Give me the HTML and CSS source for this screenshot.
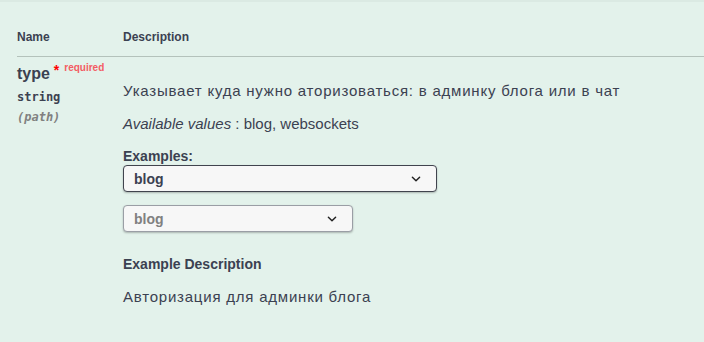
FILE: index.html
```html
<!DOCTYPE html>
<html lang="ru">
  <head>
    <meta charset="UTF-8" />
    <meta name="viewport" content="width=device-width, initial-scale=1.0" />
    <title>Parameters</title>
    <link rel="stylesheet" href="styles.css">
  </head>
  <body>
    <div class="params">
      <div class="params-head">
        <div class="col-name">Name</div>
        <div class="col-desc">Description</div>
      </div>

      <div class="param-row">
        <div class="col-name">
          <div class="param-name">type<span class="star">&nbsp;*</span><span class="required">required</span></div>
          <div class="param-type">string</div>
          <div class="param-in">(path)</div>
        </div>

        <div class="col-desc">
          <p class="desc-text cyr">Указывает куда нужно аторизоваться: в админку блога или в чат</p>
          <p class="desc-text"><i>Available values</i> : blog, websockets</p>

          <div class="examples-label">Examples:</div>
          <div class="select select-examples">
            <span>blog</span>
            <svg class="chevron" viewBox="0 0 20 20" width="12" height="12">
              <path d="M4 7 L10 13 L16 7" fill="none" stroke="#222" stroke-width="2.4" stroke-linecap="round" stroke-linejoin="round" />
            </svg>
          </div>

          <div class="select select-value">
            <span>blog</span>
            <svg class="chevron" viewBox="0 0 20 20" width="12" height="12">
              <path d="M4 7 L10 13 L16 7" fill="none" stroke="#222" stroke-width="2.4" stroke-linecap="round" stroke-linejoin="round" />
            </svg>
          </div>

          <div class="example-title">Example Description</div>
          <p class="desc-text cyr">Авторизация для админки блога</p>
        </div>
      </div>
    </div>
  </body>
</html>
```

FILE: styles.css
```css
body {
  margin: 0;
  background-color: #e3f2eb;
  border-top: 2px solid #dbeae3;
  font-family: "Liberation Sans", Arial, sans-serif;
  color: #3b4151;
  height: 340px;
  overflow: hidden;
}

.params {
  padding-left: 17px;
}

.params-head {
  display: flex;
  padding: 28px 0 12px;
  border-bottom: 1px solid #b4c2bb;
  font-size: 12px;
  font-weight: 700;
  line-height: 14px;
}

.col-name {
  width: 106px;
  flex-shrink: 0;
}

.col-desc {
  flex: 1;
}

.param-row {
  display: flex;
  padding-top: 8px;
}

.param-name {
  font-size: 16px;
  font-weight: 700;
  line-height: 18px;
}

.star {
  color: #ff0000;
  font-size: 14px;
  position: relative;
  top: -4px;
}

.required {
  color: #f35d63;
  font-size: 10px;
  position: relative;
  top: -8px;
  margin-left: 5px;
}

.param-type {
  font-family: "DejaVu Sans Mono", monospace;
  font-size: 12px;
  font-weight: 700;
  line-height: 14px;
  margin-top: 5px;
}

.param-in {
  font-family: "DejaVu Sans Mono", monospace;
  font-size: 12px;
  font-weight: 700;
  font-style: italic;
  color: #808080;
  line-height: 14px;
  margin-top: 6px;
}

.desc-text {
  margin: 0 0 13px;
  font-size: 15px;
  line-height: 20px;
}

.desc-text.cyr {
  letter-spacing: 0.78px;
}

.param-row .col-desc {
  padding-top: 16px;
}

.examples-label {
  font-size: 14px;
  font-weight: 700;
  line-height: 18px;
  margin-top: 1px;
}

.select {
  display: flex;
  align-items: center;
  justify-content: space-between;
  box-sizing: border-box;
  height: 27px;
  padding: 0 14px 0 10px;
  background-color: #f7f7f7;
  border-radius: 4px;
  box-shadow: 0 1px 2px 0 rgba(0, 0, 0, 0.25);
  font-size: 14px;
  font-weight: 700;
}

.select-examples {
  width: 314px;
  border: 1px solid #41444e;
}

.select-value {
  width: 230px;
  margin-top: 13px;
  border: 1px solid #9a9ea5;
  color: #808080;
}

.chevron {
  display: block;
}

.example-title {
  margin-top: 23px;
  font-size: 14px;
  font-weight: 700;
  line-height: 18px;
  margin-bottom: 14px;
}
```
